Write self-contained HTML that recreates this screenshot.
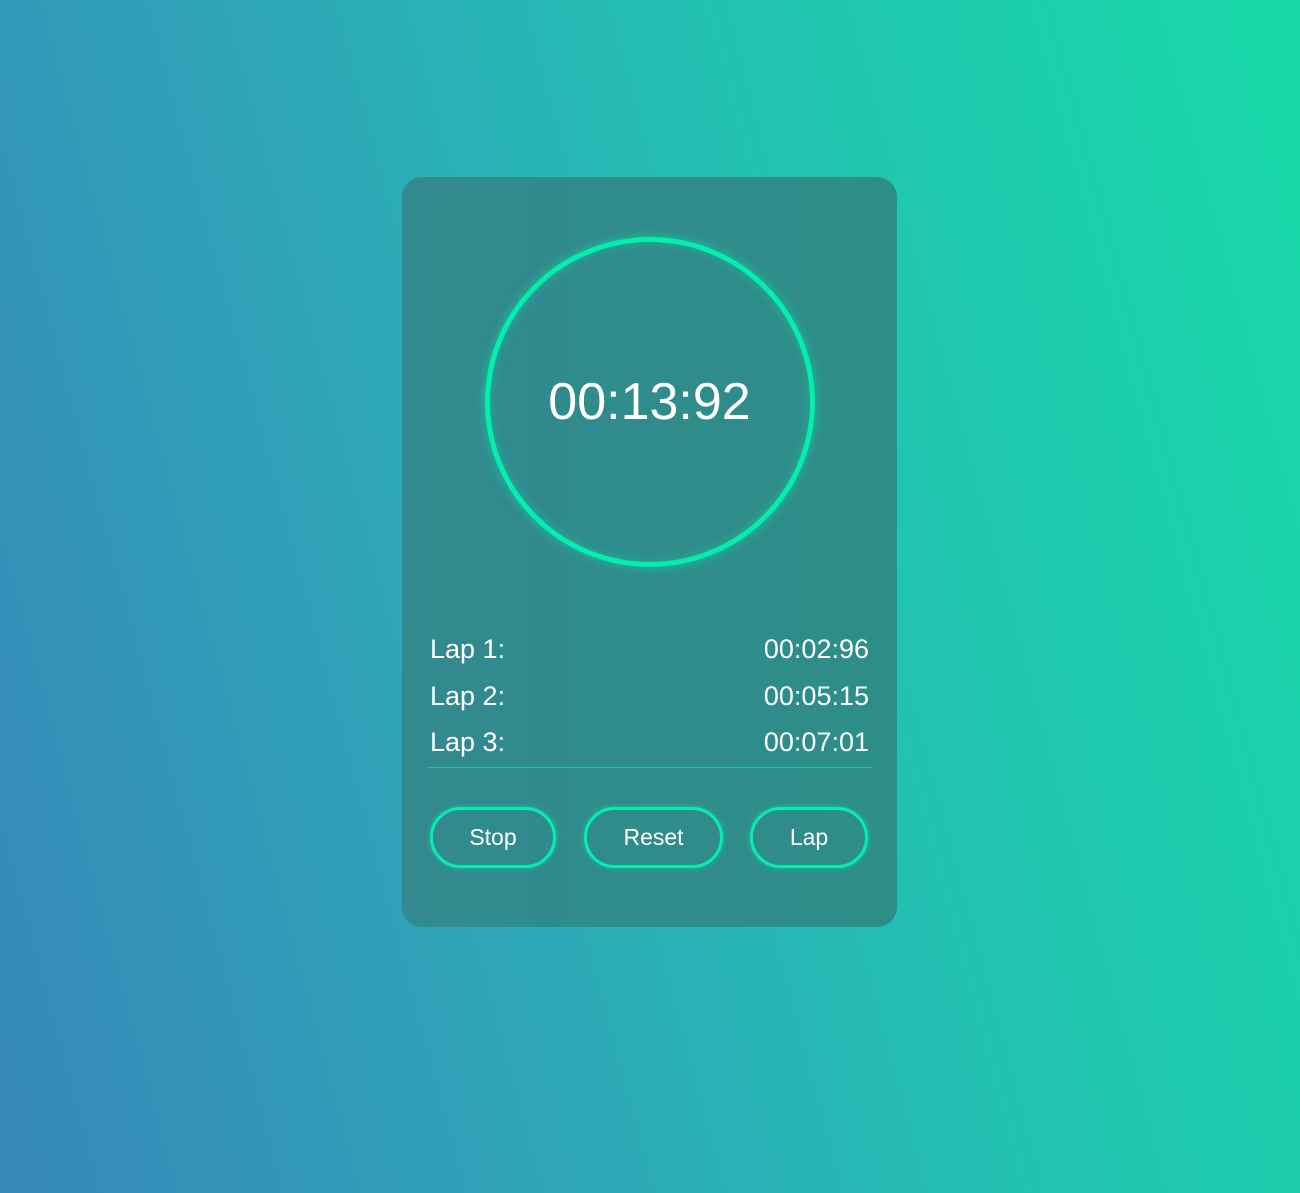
<!DOCTYPE html>
<html><head><style>
html,body{margin:0;padding:0}
body{width:1300px;height:1193px;overflow:hidden;background:linear-gradient(75deg,#3787b8 0%,#2ea6b8 35%,#22c3b2 65%,#18d9a8 100%);font-family:"Liberation Sans",Arial,sans-serif;color:#fff;position:relative}
.card{position:absolute;left:402px;top:177px;width:495px;height:750px;border-radius:20px;background:linear-gradient(90deg,#32898f,#2d8e88)}
.ring{position:absolute;left:485px;top:237px;width:320px;height:320px;border:5px solid #05eeb0;border-radius:50%;box-shadow:0 0 10px rgba(0,240,176,.6),inset 0 0 10px rgba(0,240,176,.4)}
.time{position:absolute;left:402px;width:495px;top:372px;text-align:center;font-size:52px}
.lap{position:absolute;left:430px;width:439px;font-size:27px;display:flex;justify-content:space-between}
.line{position:absolute;left:427px;top:767px;width:445px;height:1px;background:rgba(30,220,180,.6)}
.btn{position:absolute;top:807px;height:55px;border:3px solid #05eeb0;border-radius:32px;box-shadow:0 0 6px rgba(0,240,176,.6);font-size:23px;text-align:center;line-height:55px}
</style></head><body>
<div class="card"></div>
<div class="ring"></div>
<div class="time">00:13:92</div>
<div class="lap" style="top:634px"><span>Lap 1:</span><span>00:02:96</span></div>
<div class="lap" style="top:681px"><span>Lap 2:</span><span>00:05:15</span></div>
<div class="lap" style="top:727px"><span>Lap 3:</span><span>00:07:01</span></div>
<div class="line"></div>
<div class="btn" style="left:430px;width:120px">Stop</div>
<div class="btn" style="left:584px;width:133px">Reset</div>
<div class="btn" style="left:750px;width:112px">Lap</div>
</body></html>
